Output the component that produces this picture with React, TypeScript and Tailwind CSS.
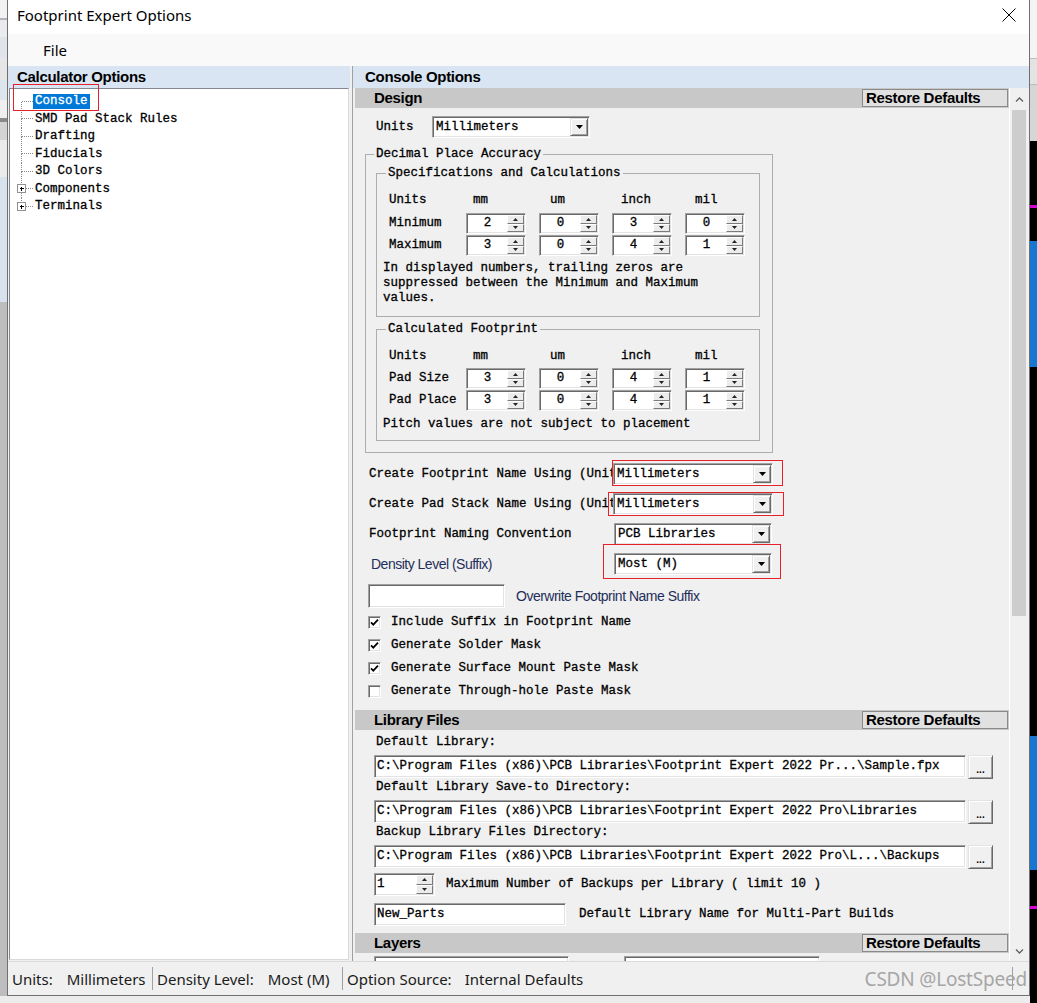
import React from "react";

const MONO =
  "font-['Liberation_Mono',monospace] text-[12.5px] leading-[15px] text-black [-webkit-text-stroke:0.3px_currentColor]";
const HEAD = "font-['Liberation_Sans',Arial,sans-serif] text-[15px] font-bold tracking-[-0.3px] text-black";
const UI = "font-['Noto_Sans',sans-serif] text-[15px] leading-[20px] text-[#1a1a1a]";
const ARIAL = "font-['Liberation_Sans',Arial,sans-serif] text-[14px] tracking-[-0.5px] text-[#1f2f5a]";
const SUNKEN =
  "border border-t-[#a0a0a0] border-l-[#a0a0a0] border-r-white border-b-white bg-white shadow-[inset_1px_1px_0_#696969,inset_-1px_-1px_0_#e3e3e3]";
const RAISED =
  "border border-t-[#e3e3e3] border-l-[#e3e3e3] border-r-[#696969] border-b-[#696969] bg-[#f0f0f0] shadow-[inset_1px_1px_0_#ffffff,inset_-1px_-1px_0_#a0a0a0]";
const RAISED_SM = "border border-t-white border-l-white border-r-[#7a7a7a] border-b-[#7a7a7a] bg-[#ececec]";

function Tri({ up }: { up?: boolean }) {
  return (
    <svg width="5" height="3" viewBox="0 0 5 3" className="block">
      <path d={up ? "M2.5 0L5 3H0z" : "M0 0h5L2.5 3z"} fill="#222" />
    </svg>
  );
}

function Spin({ value, left, wide }: { value: string; left?: boolean; wide?: boolean }) {
  return (
    <div className={`${SUNKEN} flex ${wide ? "h-[23px] w-[61px]" : "h-[21px] w-[60px]"} p-[1px]`}>
      <div className={`${MONO} flex flex-1 items-center ${left ? "pl-[1px]" : "justify-center"}`}>{value}</div>
      <div className="flex w-[17px] flex-col">
        <div className={`${RAISED_SM} flex flex-1 items-center justify-center`}>
          <Tri up />
        </div>
        <div className={`${RAISED_SM} flex flex-1 items-center justify-center`}>
          <Tri />
        </div>
      </div>
    </div>
  );
}

function Select({ value, narrow }: { value: string; narrow?: boolean }) {
  return (
    <div className={`${SUNKEN} flex h-[22px] ${narrow ? "w-[158px]" : "w-[160px]"} p-[1px]`}>
      <div className={`${MONO} flex flex-1 items-center pl-[2px]`}>{value}</div>
      <div className={`${RAISED} flex w-[18px] items-center justify-center`}>
        <svg width="7" height="4" viewBox="0 0 7 4" className="block">
          <path d="M0 0h7L3.5 4z" fill="#000" />
        </svg>
      </div>
    </div>
  );
}

function Check({ on }: { on?: boolean }) {
  return (
    <div className={`${SUNKEN} flex h-[13px] w-[13px] shrink-0 items-center justify-center`}>
      {on && (
        <svg width="9" height="9" viewBox="0 0 9 9" className="block">
          <path d="M1 4.3l2.3 2.4L8 1.6" stroke="#000" strokeWidth="1.7" fill="none" />
        </svg>
      )}
    </div>
  );
}

function Chevron({ down }: { down?: boolean }) {
  return (
    <svg width="9" height="6" viewBox="0 0 9 6" className="block">
      <path d={down ? "M1 1.5l3.5 3.5L8 1.5" : "M1 4.5L4.5 1 8 4.5"} stroke="#606060" strokeWidth="1.3" fill="none" />
    </svg>
  );
}

function SectionHead({ title }: { title: string }) {
  return (
    <div className="flex h-[20px] items-center justify-between bg-[#c8c8c8] pl-[19px]">
      <span className={HEAD}>{title}</span>
      <div className={`${HEAD} mr-[1px] flex h-[18px] w-[146px] items-center border border-[#8a8a8a] bg-[#e1e1e1] pl-[3px]`}>
        Restore Defaults
      </div>
    </div>
  );
}

function TreeRow({ label, first, last, plus, selected }: { label: string; first?: boolean; last?: boolean; plus?: boolean; selected?: boolean }) {
  const mid = 8.5;
  return (
    <div className="flex h-[17.5px] items-center">
      <svg width="23" height="18" viewBox="0 0 23 18" className="block shrink-0" shapeRendering="crispEdges">
        {!first && <line x1="11.5" y1="0" x2="11.5" y2={plus ? 4 : mid} stroke="#8a8a8a" strokeDasharray="1 1" />}
        {!last && <line x1="11.5" y1={plus ? 13 : mid} x2="11.5" y2="18" stroke="#8a8a8a" strokeDasharray="1 1" />}
        <line x1={plus ? 16 : 12} y1={mid} x2="23" y2={mid} stroke="#8a8a8a" strokeDasharray="1 1" />
        {plus && (
          <>
            <rect x="7.5" y="4.5" width="8" height="8" fill="#fff" stroke="#919191" />
            <line x1="9.5" y1="8.5" x2="14" y2="8.5" stroke="#000" />
            <line x1="11.5" y1="6.5" x2="11.5" y2="11" stroke="#000" />
          </>
        )}
      </svg>
      <span className={`${MONO} px-[2px] ${selected ? "bg-[#0078d7] !text-white" : ""}`}>{label}</span>
    </div>
  );
}

function SpinRow({ label, vals, top }: { label: string; vals: string[]; top: string }) {
  return (
    <div className={`flex items-center ${top}`}>
      <div className={`${MONO} w-[77px]`}>{label}</div>
      <div className="flex gap-[13px]">
        {vals.map((v, i) => (
          <Spin key={i} value={v} />
        ))}
      </div>
    </div>
  );
}

function UnitHeads() {
  return (
    <div className={`${MONO} flex h-[15px]`}>
      <div className="w-[77px]">Units</div>
      <div className="w-[73px] pl-[7px]">mm</div>
      <div className="w-[73px] pl-[11px]">um</div>
      <div className="w-[73px] pl-[9px]">inch</div>
      <div className="w-[60px] pl-[10px]">mil</div>
    </div>
  );
}

function PathRow({ label, value, top }: { label: string; value: string; top: string }) {
  return (
    <div className={top}>
      <div className={`${MONO} pl-[21px]`}>{label}</div>
      <div className="mt-[5px] flex h-[24px] items-start pl-[19px]">
        <div className={`${SUNKEN} ${MONO} flex h-[23px] w-[592px] items-center overflow-hidden whitespace-nowrap pl-[2px]`}>{value}</div>
        <div className={`${RAISED} ml-[2px] flex h-[24px] w-[25px] items-end justify-center pb-[3px] font-['Liberation_Sans',Arial,sans-serif] text-[10px] font-bold leading-[10px] text-black`}>
          ...
        </div>
      </div>
    </div>
  );
}

export default function App() {
  return (
    <div className="flex h-[1003px] w-[1037px] overflow-hidden bg-[#ececec]">
      {/* desktop behind, left */}
      <div className="flex w-[7px] flex-col">
        <div className="h-[18px] bg-[#f2f2f2]" />
        <div className="h-[2px] bg-[#b4b4b4]" />
        <div className="h-[17px] bg-[#e9ebee]" />
        <div className="h-[21px] bg-[#dfe4ea]" />
        <div className="h-[22px] bg-[#e6e6e6]" />
        <div className="h-[20px] bg-[#dce4ec]" />
        <div className="h-[18px] bg-[#efefef]" />
        <div className="h-[4px] bg-[#8a8a8a]" />
        <div className="h-[18px] bg-[#d3d3d3]" />
        <div className="h-[37px] bg-[#ebebeb]" />
        <div className="h-[125px] bg-[#d7e2ee]" />
        <div className="h-[694px] bg-[#bdbdbd]" />
        <div className="flex-1 bg-[#ececec]" />
      </div>

      {/* dialog */}
      <div className="flex w-[1023px] flex-col">
        <div className="flex h-[996px] flex-col border-x border-b border-[#707070] bg-white">
          <div className="flex h-[34px] items-center justify-between bg-white pb-[4px] pl-[9px]">
            <span className={`${UI} text-black`}>Footprint Expert Options</span>
            <svg width="14" height="14" viewBox="0 0 14 14" className="mr-[13px] block">
              <path d="M0.5 0.5l13 13M13.5 0.5l-13 13" stroke="#000" strokeWidth="1" />
            </svg>
          </div>
          <div className="flex h-[32px] items-center bg-[#f9f9f9] pl-[35px]">
            <span className={`${UI} text-black`}>File</span>
          </div>

          <div className="flex h-[895px]">
            {/* left pane */}
            <div className="relative flex w-[342px] flex-col bg-[#f0f0f0]">
              <div className="flex h-[22px] items-center bg-[#d9e5f2] pl-[9px]">
                <span className={HEAD}>Calculator Options</span>
              </div>
              <div className="ml-[1px] h-[872px] w-[340px] border border-t-[#828790] border-l-[#828790] border-r-[#d9d9d9] border-b-[#d9d9d9] bg-white pt-[4px]">
                <TreeRow label="Console" first selected />
                <TreeRow label="SMD Pad Stack Rules" />
                <TreeRow label="Drafting" />
                <TreeRow label="Fiducials" />
                <TreeRow label="3D Colors" />
                <TreeRow label="Components" plus />
                <TreeRow label="Terminals" plus last />
              </div>
              <span className="pointer-events-none absolute left-[5px] top-[18px] h-[27px] w-[86px] border border-[#e8202a]" />
            </div>

            {/* splitter */}
            <div className="w-[3px] border-r border-[#a0a0a0] bg-[#f0f0f0]" />

            {/* right pane */}
            <div className="flex flex-1 flex-col bg-[#f0f0f0]">
              <div className="flex h-[22px] items-center bg-[#d9e5f2] pl-[12px]">
                <span className={HEAD}>Console Options</span>
              </div>
              <div className="flex h-[873px]">
                <div className="w-[2px] bg-[#f0f0f0]" />
                <div className="h-full w-[654px] overflow-hidden bg-[#f0f0f0]">
                  <SectionHead title="Design" />

                  <div className="mt-[8px] flex items-center pl-[21px]">
                    <div className={`${MONO} w-[56px]`}>Units</div>
                    <Select value="Millimeters" narrow />
                  </div>

                  <fieldset className="ml-[10px] mt-[9px] w-[408px] border border-[#adadad] pb-[11px] pl-[8px] pt-[4px]">
                    <legend className={`${MONO} px-[2px]`}>Decimal Place Accuracy</legend>
                    <fieldset className="ml-[2px] w-[384px] border border-[#adadad] pb-[10px] pl-[6px]">
                      <legend className={`${MONO} ml-[3px] px-[2px]`}>Specifications and Calculations</legend>
                      <div className="ml-[6px] mt-[12px]">
                        <UnitHeads />
                        <SpinRow label="Minimum" vals={["2", "0", "3", "0"]} top="mt-[5px]" />
                        <SpinRow label="Maximum" vals={["3", "0", "4", "1"]} top="mt-[1px]" />
                      </div>
                      <p className={`${MONO} mt-[5px]`}>
                        In displayed numbers, trailing zeros are
                        <br />
                        suppressed between the Minimum and Maximum
                        <br />
                        values.
                      </p>
                    </fieldset>
                    <fieldset className="ml-[2px] mt-[5px] w-[384px] border border-[#adadad] pb-[8px] pl-[6px]">
                      <legend className={`${MONO} ml-[3px] px-[2px]`}>Calculated Footprint</legend>
                      <div className="ml-[6px] mt-[12px]">
                        <UnitHeads />
                        <SpinRow label="Pad Size" vals={["3", "0", "4", "1"]} top="mt-[4px]" />
                        <SpinRow label="Pad Place" vals={["3", "0", "4", "1"]} top="mt-[1px]" />
                      </div>
                      <p className={`${MONO} mt-[6px]`}>Pitch values are not subject to placement</p>
                    </fieldset>
                  </fieldset>

                  <div className="mt-[10px] flex items-center pl-[14px]">
                    <div className={`${MONO} w-[244px] overflow-hidden whitespace-nowrap`}>Create Footprint Name Using (Units)</div>
                    <div className="relative">
                      <Select value="Millimeters" />
                      <span className="pointer-events-none absolute bottom-[-1px] left-[-1px] right-[-10px] top-[-3px] border border-[#e8202a]" />
                    </div>
                  </div>
                  <div className="mt-[8px] flex items-center pl-[14px]">
                    <div className={`${MONO} w-[244px] overflow-hidden whitespace-nowrap`}>Create Pad Stack Name Using (Units)</div>
                    <div className="relative">
                      <Select value="Millimeters" />
                      <span className="pointer-events-none absolute bottom-[-1px] left-[-5px] right-[-11px] top-[-1px] border border-[#e8202a]" />
                    </div>
                  </div>
                  <div className="mt-[8px] flex items-center pl-[14px]">
                    <div className={`${MONO} w-[245px] overflow-hidden whitespace-nowrap`}>Footprint Naming Convention</div>
                    <Select value="PCB Libraries" narrow />
                  </div>
                  <div className="mt-[8px] flex items-center pl-[14px]">
                    <div className={`${ARIAL} w-[245px] pl-[2px]`}>Density Level (Suffix)</div>
                    <div className="relative">
                      <Select value="Most (M)" narrow />
                      <span className="pointer-events-none absolute bottom-[-4px] left-[-11px] right-[-9px] top-[-9px] border border-[#e8202a]" />
                    </div>
                  </div>

                  <div className="mt-[9px] flex items-center pl-[13px]">
                    <div className={`${SUNKEN} h-[24px] w-[137px]`} />
                    <span className={`${ARIAL} ml-[11px]`}>Overwrite Footprint Name Suffix</span>
                  </div>

                  <div className="mt-[3px] pb-[7px]">
                    {[
                      ["Include Suffix in Footprint Name", true],
                      ["Generate Solder Mask", true],
                      ["Generate Surface Mount Paste Mask", true],
                      ["Generate Through-hole Paste Mask", false],
                    ].map(([t, on]) => (
                      <div key={t as string} className="flex h-[23px] items-center pl-[13px]">
                        <Check on={on as boolean} />
                        <span className={`${MONO} ml-[10px]`}>{t as string}</span>
                      </div>
                    ))}
                  </div>

                  <SectionHead title="Library Files" />
                  <div className="pt-[5px]">
                    <PathRow
                      label="Default Library:"
                      value={"C:\\Program Files (x86)\\PCB Libraries\\Footprint Expert 2022 Pr...\\Sample.fpx"}
                      top=""
                    />
                    <PathRow
                      label="Default Library Save-to Directory:"
                      value={"C:\\Program Files (x86)\\PCB Libraries\\Footprint Expert 2022 Pro\\Libraries"}
                      top="mt-[1px]"
                    />
                    <PathRow
                      label="Backup Library Files Directory:"
                      value={"C:\\Program Files (x86)\\PCB Libraries\\Footprint Expert 2022 Pro\\L...\\Backups"}
                      top="mt-[1px]"
                    />
                    <div className="mt-[4px] flex items-center pl-[19px]">
                      <Spin value="1" left wide />
                      <span className={`${MONO} ml-[11px]`}>Maximum Number of Backups per Library ( limit 10 )</span>
                    </div>
                    <div className="mt-[7px] flex items-center pl-[19px]">
                      <div className={`${SUNKEN} ${MONO} flex h-[23px] w-[192px] items-center pl-[2px]`}>New_Parts</div>
                      <span className={`${MONO} ml-[13px]`}>Default Library Name for Multi-Part Builds</span>
                    </div>
                  </div>

                  <div className="mt-[7px]">
                    <SectionHead title="Layers" />
                  </div>
                  <div className="mt-[3px] flex pl-[19px]">
                    <div className={`${SUNKEN} h-[23px] w-[195px]`} />
                    <div className={`${SUNKEN} ml-[55px] h-[23px] w-[196px]`} />
                  </div>
                </div>

                {/* scrollbar */}
                <div className="flex w-[19px] flex-col border-l border-white bg-[#f0f0f0]">
                  <div className="flex h-[22px] items-center justify-center pt-[2px]">
                    <Chevron />
                  </div>
                  <div className="mx-[2px] h-[506px] bg-[#cdcdcd]" />
                  <div className="flex-1" />
                  <div className="flex h-[20px] items-center justify-center">
                    <Chevron down />
                  </div>
                </div>
              </div>
            </div>
          </div>

          {/* status bar */}
          <div className={`${UI} relative flex h-[34px] items-center border-t border-[#dadada] bg-[#f0f0f0]`}>
            <div className="flex w-[144px] pl-[4px]">
              <span>Units:</span>
              <span className="ml-[14px]">Millimeters</span>
            </div>
            <div className="h-[23px] w-px bg-[#a0a0a0]" />
            <div className="flex w-[189px] pl-[4px]">
              <span>Density Level:</span>
              <span className="ml-[14px]">Most (M)</span>
            </div>
            <div className="h-[23px] w-px bg-[#a0a0a0]" />
            <div className="flex pl-[4px]">
              <span>Option Source:</span>
              <span className="ml-[13px]">Internal Defaults</span>
            </div>
            <div className="flex-1" />
            <div className="h-[23px] w-px bg-[#a0a0a0]" />
            <div className="w-[16px]" />
            <span className="pointer-events-none absolute right-[2px] top-[5px] font-['Noto_Sans',sans-serif] text-[19px] leading-[24px] tracking-[-0.2px] text-[#a6a6a6]">
              CSDN @LostSpeed
            </span>
          </div>
        </div>
        <div className="flex-1 bg-[#ececec]" />
      </div>

      {/* desktop behind, right */}
      <div className="flex w-[7px] flex-col">
        <div className="h-[58px] bg-[#f4f4f4]" />
        <div className="h-[1px] bg-[#c0c0c0]" />
        <div className="h-[25px] bg-[#e3e3e3]" />
        <div className="h-[1px] bg-[#bcbcbc]" />
        <div className="h-[56px] bg-[#d6d6d6]" />
        <div className="h-[64px] bg-black" />
        <div className="h-[3px] bg-[#d400d4]" />
        <div className="h-[33px] bg-black" />
        <div className="h-[126px] bg-[#1677d2]" />
        <div className="h-[369px] bg-black" />
        <div className="h-[134px] bg-[#1677d2]" />
        <div className="h-[36px] bg-black" />
        <div className="h-[3px] bg-[#d400d4]" />
        <div className="flex-1 bg-black" />
      </div>
    </div>
  );
}
